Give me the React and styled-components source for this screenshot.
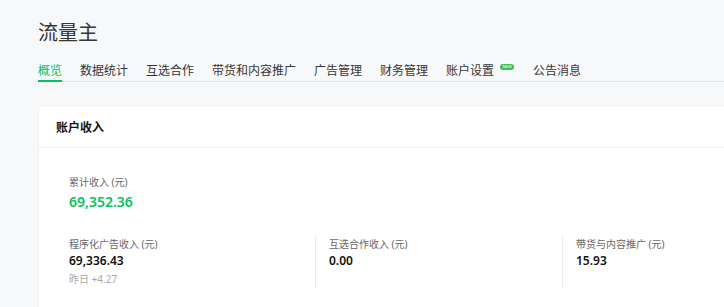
import React from "react";
import styled, { createGlobalStyle } from "styled-components";

const Global = createGlobalStyle`
  html, body { margin: 0; padding: 0; background: #f7f8fa; }
  body { font-family: "Noto Sans", "Noto Sans CJK SC", sans-serif; overflow: hidden; }
  * { box-sizing: border-box; }
`;

const Page = styled.div`
  width: 724px;
  height: 307px;
  overflow: hidden;
  padding: 18px 0 0 38px;
  background: #f7f8fa;
`;

const Title = styled.h1`
  margin: 0 0 15px;
  font-size: 20px;
  line-height: 28px;
  font-weight: 400;
  color: #353535;
  font-family: "Noto Sans CJK SC", sans-serif;
`;

const Tabs = styled.nav`
  display: flex;
  gap: 18px;
  border-bottom: 1px solid #e3e4e6;
  width: 1200px;
`;

const Tab = styled.div`
  position: relative;
  display: flex;
  align-items: flex-start;
  font-family: "Noto Sans CJK SC", sans-serif;
  font-size: 12px;
  line-height: 18px;
  color: ${(p) => (p.$active ? "#07c160" : "#353535")};
  border-bottom: 2px solid ${(p) => (p.$active ? "#07c160" : "transparent")};
  margin-bottom: -1px;
  padding-bottom: 1px;
`;

const NewBadge = styled.span`
  display: inline-flex;
  align-items: center;
  justify-content: center;
  margin: 3px 1px 0 6px;
  width: 14px;
  height: 6px;
  border-radius: 3px;
  background: #3fbf5a;
  color: #fff;
  font-family: "Liberation Sans", sans-serif;
  font-size: 4px;
  line-height: 6px;
`;

const Card = styled.section`
  margin-top: 23px;
  width: 1100px;
  background: #fff;
  border: 1px solid #eef0f2;
  border-radius: 5px;
  height: 300px;
`;

const CardHeader = styled.div`
  height: 42px;
  display: flex;
  align-items: center;
  padding-left: 17px;
  border-bottom: 1px solid #f0f1f2;
  font-family: "Noto Sans CJK SC", sans-serif;
  font-size: 12px;
  font-weight: 700;
  color: #111;
`;

const CardBody = styled.div`
  padding: 27px 0 0 30px;
`;

const Label = styled.div`
  font-family: "Noto Sans", "Noto Sans CJK SC", sans-serif;
  font-size: 10px;
  line-height: 14px;
  color: #666;
`;

const Total = styled.div`
  margin-top: 3px;
  font-family: "Noto Sans", "Noto Sans CJK SC", sans-serif;
  font-size: 14px;
  line-height: 20px;
  font-weight: 600;
  color: #07c160;
`;

const Stats = styled.div`
  display: grid;
  grid-template-columns: 246px 247px 247px 247px;
  margin-top: 24px;
`;

const Stat = styled.div`
  height: 51px;
  padding-top: 1px;
  ${(p) => (p.$divider ? "border-left: 1px solid #e9e9e9; padding-left: 13px;" : "")}
`;

const Value = styled.div`
  margin-top: 2px;
  font-family: "Noto Sans", "Noto Sans CJK SC", sans-serif;
  font-size: 12px;
  line-height: 16px;
  font-weight: 600;
  color: #111;
`;

const Sub = styled.div`
  margin-top: 3px;
  font-family: "Noto Sans", "Noto Sans CJK SC", sans-serif;
  font-size: 10px;
  line-height: 14px;
  color: #a8a8a8;
`;

const tabs = ["概览", "数据统计", "互选合作", "带货和内容推广", "广告管理", "财务管理", "账户设置", "公告消息"];

const stats = [
  { label: "程序化广告收入 (元)", value: "69,336.43", sub: "昨日 +4.27" },
  { label: "互选合作收入 (元)", value: "0.00" },
  { label: "带货与内容推广 (元)", value: "15.93" },
];

export default function App() {
  return (
    <Page>
      <Global />
      <Title>流量主</Title>
      <Tabs>
        {tabs.map((t, i) => (
          <Tab key={t} $active={i === 0}>
            {t}
            {t === "账户设置" && <NewBadge>NEW</NewBadge>}
          </Tab>
        ))}
      </Tabs>
      <Card>
        <CardHeader>账户收入</CardHeader>
        <CardBody>
          <Label>累计收入 (元)</Label>
          <Total>69,352.36</Total>
          <Stats>
            {stats.map((s, i) => (
              <Stat key={s.label} $divider={i > 0}>
                <Label>{s.label}</Label>
                <Value>{s.value}</Value>
                {s.sub && <Sub>{s.sub}</Sub>}
              </Stat>
            ))}
          </Stats>
        </CardBody>
      </Card>
    </Page>
  );
}
